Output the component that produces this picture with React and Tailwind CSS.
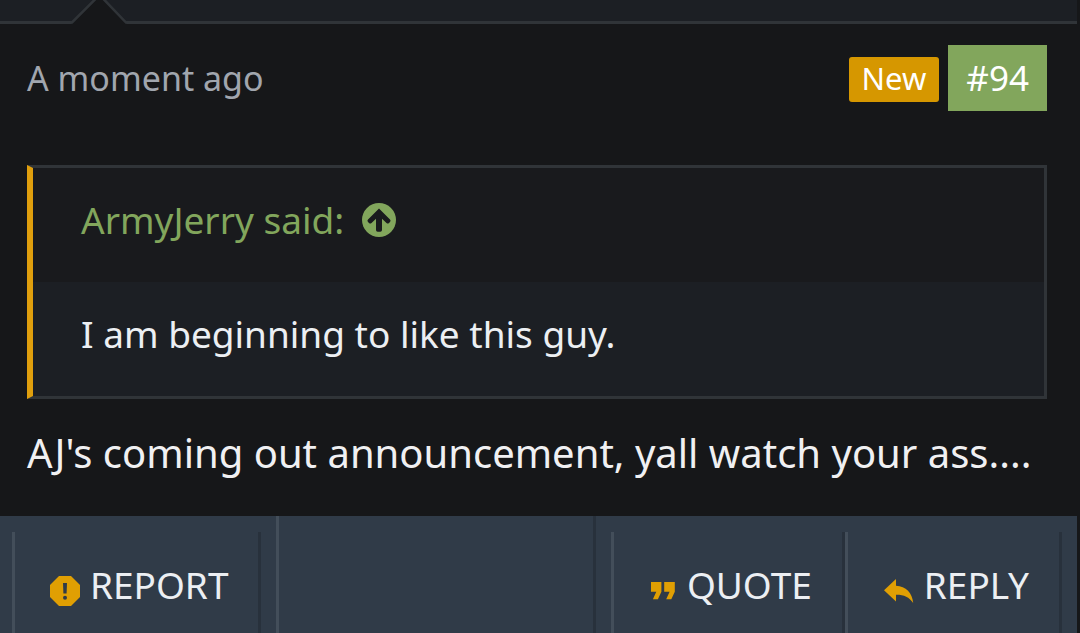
function ArrowUpCircle() {
  return (
    <svg viewBox="0 0 34 34" className="size-[34px] shrink-0" aria-hidden="true">
      <circle cx="17" cy="17" r="17" fill="#82a65c" />
      <path
        d="M17 5.500 28 16.500Q29.200 17.800 28 19L27 20Q25.700 21.100 24.500 19.900L20 15.700V27Q20 28.800 18.300 28.800H15.700Q14 28.800 14 27V15.700L9.500 19.900Q8.300 21.100 7 20L6 19Q4.800 17.800 6 16.500Z"
        fill="#191a1d"
      />
    </svg>
  );
}

function ReportIcon() {
  return (
    <svg viewBox="0 0 30 30" className="mt-3 size-[30px] shrink-0" aria-hidden="true">
      <path d="M9 0H21L30 9V21L21 30H9L0 21V9Z" fill="#e09f03" />
      <path d="M13 7h4l-.4 10.500h-3.200Z" fill="#303b48" />
      <circle cx="15" cy="21.800" r="2" fill="#303b48" />
    </svg>
  );
}

function QuoteIcon() {
  return (
    <svg viewBox="0 0 24 18" className="mt-3 h-[18px] w-6 shrink-0" aria-hidden="true">
      <path d="M0 0H10.400V9.800L6.900 17.200H1.900L5.300 9.800H0ZM13.200 0H23.800V9.800L20.300 17.200H15.200L18.600 9.800H13.200Z" fill="#e09f03" />
    </svg>
  );
}

function ReplyIcon() {
  return (
    <svg viewBox="0 0 30 24" className="mt-3 h-6 w-[30px] shrink-0" aria-hidden="true">
      <path d="M12 0V6.700C22 7 28.400 14 29.200 24C25 18.200 20 15.700 12 15.800V22.500L0 11.300Z" fill="#e09f03" />
    </svg>
  );
}

const actionStyle =
  "flex items-center border-x-3 border-l-[#434e5a] border-r-[#28313c] pt-1 text-[37px] leading-[52px] text-[#eceff3] uppercase";

export default function App() {
  return (
    <div className="flex min-h-screen flex-col bg-[#161719] pr-[3px] font-['Noto_Sans',sans-serif]">
      <header className="relative h-6 border-b-3 border-[#303438] bg-[#1c1f24]">
        <svg viewBox="0 0 56 24" className="absolute top-0 left-[71px] h-6 w-14" aria-hidden="true">
          <path d="M0 24 26-2H30L56 24Z" fill="#161719" />
          <path d="M0 22.500H1L25.500-2M31.500-2 55 22.500H56" fill="none" stroke="#303438" strokeWidth="2.500" />
        </svg>
      </header>

      <article className="flex flex-1 flex-col">
        <div className="flex items-center justify-between pt-[21px] pr-[30px] pl-[27px]">
          <time className="text-[34px] leading-[66px] text-[#a1a6ae]">A moment ago</time>
          <div className="flex items-center gap-[9px]">
            <span className="mt-[2px] rounded-[3px] bg-[#d69700] px-[13px] pb-[2px] text-[31px] leading-[43px] text-white">New</span>
            <a href="#94" className="bg-[#82a65c] px-[18px] text-[35px] leading-[66px] text-white">
              #94
            </a>
          </div>
        </div>

        <blockquote className="mt-[54px] mr-[30px] ml-[27px] border-3 border-l-6 border-[#303438] border-l-[#e09f0d] text-[37px] leading-[52px]">
          <div className="bg-[#191a1d] px-12 pt-[26px] pb-9">
            <a href="#post" className="flex w-fit items-center gap-[18px] text-[#82a65c]">
              ArmyJerry said:
              <ArrowUpCircle />
            </a>
          </div>
          <p className="bg-[#1c1f24] px-12 pt-[26px] pb-9 text-[#eceff3]">I am beginning to like this guy.</p>
        </blockquote>

        <p className="mt-[26px] pl-[27px] text-[40px] leading-[56px] whitespace-nowrap text-[#f0f0f2]">
          AJ's coming out announcement, yall watch your ass....
        </p>

        <footer className="mt-[35px] flex flex-1 bg-[#303b48] pr-[15px] pl-3">
          <div className="flex pt-4">
            <button type="button" className={`${actionStyle} gap-[10px] pr-[30px] pl-[35px]`}>
              <ReportIcon />
              Report
            </button>
          </div>
          <div className="mx-[15px] flex-1 border-x-3 border-l-[#434e5a] border-r-[#28313c]" />
          <div className="flex pt-4">
            <button type="button" className={`${actionStyle} gap-3 pr-[30px] pl-[37px]`}>
              <QuoteIcon />
              Quote
            </button>
            <button type="button" className={`${actionStyle} gap-[10px] pr-[30px] pl-9`}>
              <ReplyIcon />
              Reply
            </button>
          </div>
        </footer>
      </article>
    </div>
  );
}
